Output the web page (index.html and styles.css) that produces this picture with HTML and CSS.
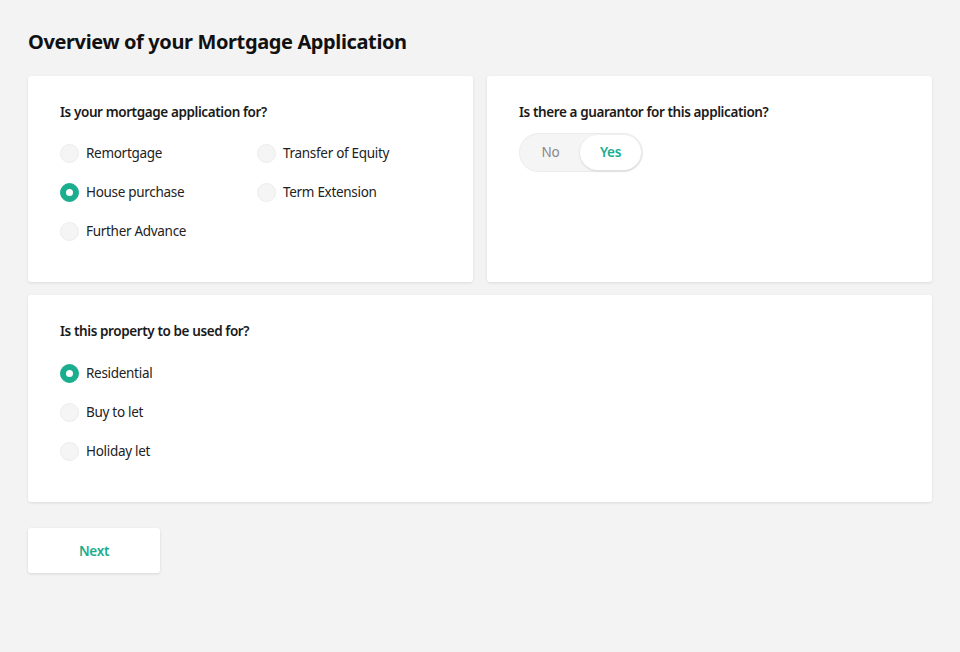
FILE: index.html
```html
<!DOCTYPE html>
<html>
<head>
<meta charset="utf-8">
<link rel="stylesheet" href="styles.css">
</head>
<body>
<main class="page">
  <h1 class="title">Overview of your Mortgage Application</h1>
  <div class="row">
    <section class="card">
      <h2 class="question">Is your mortgage application for?</h2>
      <div class="options grid2">
        <label class="opt"><span class="radio"></span>Remortgage</label>
        <label class="opt"><span class="radio"></span>Transfer of Equity</label>
        <label class="opt"><span class="radio on"></span>House purchase</label>
        <label class="opt"><span class="radio"></span>Term Extension</label>
        <label class="opt"><span class="radio"></span>Further Advance</label>
      </div>
    </section>
    <section class="card">
      <h2 class="question">Is there a guarantor for this application?</h2>
      <div class="toggle">
        <span class="tog">No</span>
        <span class="tog active">Yes</span>
      </div>
    </section>
  </div>
  <section class="card wide">
    <h2 class="question">Is this property to be used for?</h2>
    <div class="options single">
      <label class="opt"><span class="radio on"></span>Residential</label>
      <label class="opt"><span class="radio"></span>Buy to let</label>
      <label class="opt"><span class="radio"></span>Holiday let</label>
    </div>
  </section>
  <button class="next">Next</button>
</main>
</body>
</html>
```

FILE: styles.css
```css
* { box-sizing: border-box; }
html, body { margin: 0; padding: 0; }
body {
  background: #f3f3f3;
  font-family: "Noto Sans", "Open Sans", sans-serif;
  color: #222;
  width: 960px;
  height: 652px;
}
.page {
  padding: 28px 28px 0 28px;
}
.title {
  margin: 0;
  font-size: 20px;
  font-weight: 700;
  line-height: 28px;
  letter-spacing: -0.38px;
  color: #111;
}
.row {
  margin-top: 20px;
  display: grid;
  grid-template-columns: 1fr 1fr;
  gap: 14px;
}
.card {
  background: #fff;
  border-radius: 3px;
  box-shadow: 0 1px 3px rgba(0,0,0,0.10);
  height: 206px;
  padding: 26px 32px;
}
.wide { margin-top: 13px; height: 207px; }
.question {
  margin: 0;
  font-size: 13.5px;
  font-weight: 600;
  line-height: 20px;
  letter-spacing: -0.4px;
  color: #1a1a1a;
}
.options {
  display: flex;
  flex-direction: column;
  row-gap: 19px;
}
.grid2 {
  margin-top: 21px;
  display: grid;
  grid-template-columns: 197px 1fr;
}
.single { margin-top: 22px; }
.opt {
  display: flex;
  align-items: center;
  height: 20px;
  font-size: 13.5px;
  letter-spacing: -0.3px;
  color: #222;
}
.radio {
  width: 19px;
  height: 19px;
  border-radius: 50%;
  background: #f5f5f5;
  border: 1px solid #ececec;
  margin-right: 7px;
  flex: none;
  position: relative;
}
.radio.on {
  background: #1aae8e;
  border-color: #1aae8e;
}
.radio.on::after {
  content: "";
  position: absolute;
  left: 50%;
  top: 50%;
  width: 7px;
  height: 7px;
  margin: -3.5px 0 0 -3.5px;
  border-radius: 50%;
  background: #fff;
}
.toggle {
  margin-top: 11px;
  width: 124px;
  height: 39px;
  border-radius: 20px;
  background: #f5f5f5;
  border: 1px solid #ececec;
  display: flex;
  align-items: center;
  padding: 1px;
}
.tog {
  flex: 1;
  text-align: center;
  font-size: 13.5px;
  letter-spacing: -0.3px;
  color: #888;
  height: 35px;
  line-height: 35px;
  border-radius: 18px;
}
.tog.active {
  flex: none;
  width: 61px;
  background: #fff;
  color: #1aae8e;
  font-weight: 600;
  box-shadow: 0 1px 3px rgba(0,0,0,0.12);
}
.next {
  margin-top: 26px;
  width: 132px;
  height: 45px;
  background: #fff;
  border: none;
  border-radius: 3px;
  box-shadow: 0 1px 3px rgba(0,0,0,0.12);
  font-family: "Noto Sans", "Open Sans", sans-serif;
  font-size: 13.5px;
  letter-spacing: -0.3px;
  font-weight: 600;
  color: #1aae8e;
  padding: 0;
}
```
